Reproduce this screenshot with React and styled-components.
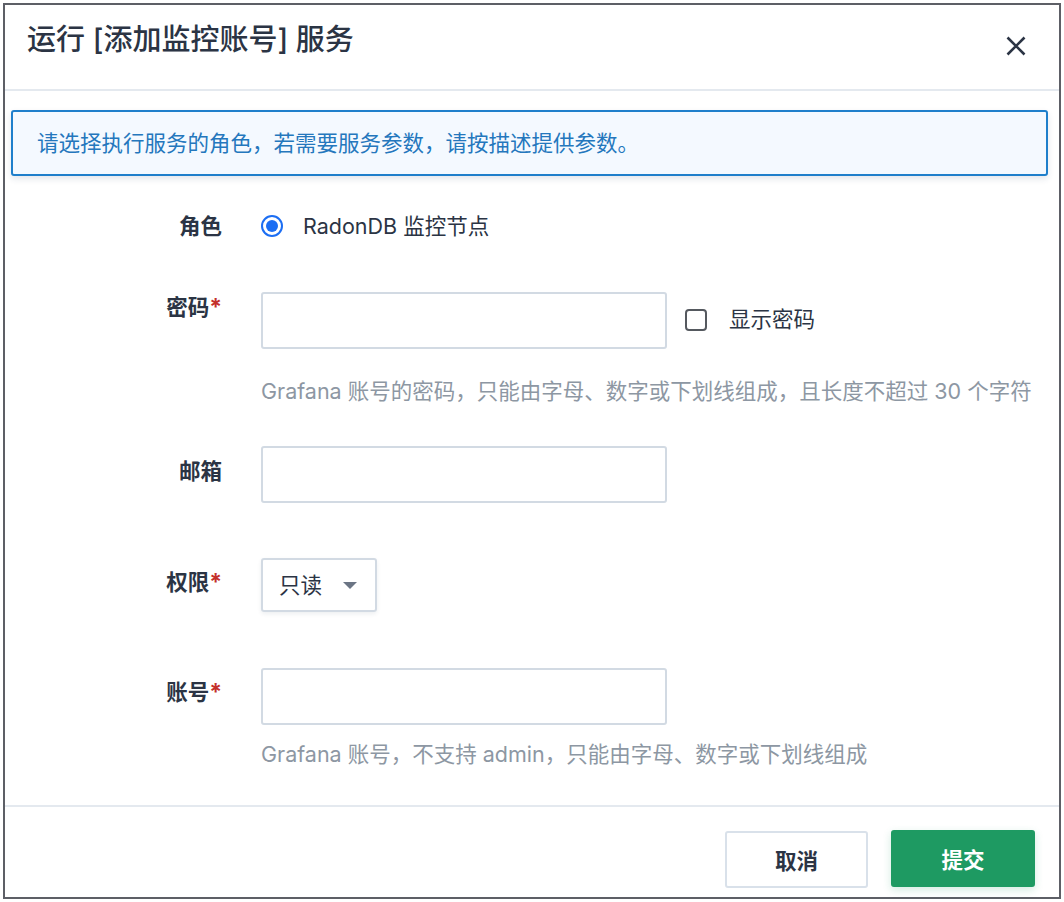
import React from "react";
import styled, { createGlobalStyle } from "styled-components";

const Global = createGlobalStyle`
  html, body { margin: 0; padding: 0; background: #ffffff; }
  body {
    font-family: "Inter", "Noto Sans CJK SC", sans-serif;
    color: #2b3444;
  }
  * { box-sizing: border-box; }
`;

const Frame = styled.div`
  margin: 3px;
  width: 1058px;
  height: 896px;
  border: 2px solid #5d5f66;
  background: #fff;
  display: flex;
  flex-direction: column;
`;

const Header = styled.div`
  height: 86px;
  border-bottom: 2px solid #e4e9ef;
  display: flex;
  align-items: flex-start;
  justify-content: space-between;
  padding: 16px 32px 0 22px;
`;

const Title = styled.h1`
  margin: 0;
  font-size: 29px;
  line-height: 38px;
  font-weight: 500;
  color: #2b3444;
`;

const CloseBtn = styled.button`
  border: 0;
  background: none;
  padding: 0;
  margin-top: 14px;
  width: 22px;
  height: 22px;
  display: flex;
  align-items: center;
  justify-content: center;
  cursor: pointer;
`;

const Alert = styled.div`
  margin: 19px 11px 0 6px;
  height: 66px;
  border: 2px solid #1f7fcb;
  border-radius: 3px;
  background: #f4f9ff;
  box-shadow: 0 3px 6px rgba(30, 60, 100, 0.12);
  display: flex;
  align-items: center;
  padding-left: 24px;
  font-size: 21.5px;
  line-height: 30px;
  color: #2477bd;
`;

const Form = styled.div`
  flex: 1;
  padding-top: 30px;
  display: flex;
  flex-direction: column;
`;

const Field = styled.div`
  display: grid;
  grid-template-columns: 217px 1fr;
  column-gap: 39px;
  align-items: start;
  margin-bottom: ${(p) => p.$gap}px;
`;

const Label = styled.div`
  text-align: right;
  font-size: 21.5px;
  font-weight: 700;
  line-height: 30px;
  padding-top: ${(p) => p.$offset}px;
  color: #2b3444;
  white-space: nowrap;
`;

const Star = styled.span`
  color: #c4302b;
  font-weight: 700;
  font-size: 23px;
`;

const Control = styled.div`
  display: flex;
  flex-direction: column;
`;

const Line = styled.div`
  display: flex;
  align-items: center;
  height: ${(p) => p.$h}px;
`;

const RadioDot = styled.span`
  width: 22px;
  height: 22px;
  border-radius: 50%;
  border: 2px solid #1c6ef3;
  display: inline-flex;
  align-items: center;
  justify-content: center;
  margin-right: 20px;
  &::after {
    content: "";
    width: 12px;
    height: 12px;
    border-radius: 50%;
    background: #1c6ef3;
  }
`;

const Text = styled.span`
  font-size: 21.5px;
  line-height: 30px;
  color: #2b3444;
  margin-top: ${(p) => p.$shift || 0}px;
`;

const Input = styled.div`
  width: 406px;
  height: 57px;
  border: 2px solid #d2dae3;
  border-radius: 3px;
  background: #fff;
`;

const CheckBox = styled.span`
  width: 22px;
  height: 22px;
  border: 2px solid #55595f;
  border-radius: 4px;
  margin-left: 18px;
  margin-right: 22px;
  margin-top: -2px;
`;

const Help = styled.div`
  margin-top: ${(p) => p.$top}px;
  font-size: 21.5px;
  line-height: 30px;
  color: #8d97a3;
  white-space: nowrap;
`;

const Select = styled.div`
  width: 116px;
  height: 54px;
  border: 2px solid #d2dae3;
  border-radius: 3px;
  box-shadow: 0 2px 4px rgba(30, 50, 80, 0.08);
  display: flex;
  align-items: center;
  justify-content: space-between;
  padding: 0 18px 0 16px;
  font-size: 21.5px;
  line-height: 30px;
  color: #2b3444;
`;

const Caret = styled.span`
  width: 0;
  height: 0;
  border-left: 7px solid transparent;
  border-right: 7px solid transparent;
  border-top: 7px solid #6b7584;
`;

const Footer = styled.div`
  border-top: 2px solid #e4e9ef;
  height: 92px;
  display: flex;
  justify-content: flex-end;
  align-items: flex-start;
  gap: 23px;
  padding: 23px 24px 0 0;
`;

const Button = styled.button`
  width: ${(p) => (p.$primary ? 144 : 143)}px;
  height: 57px;
  border-radius: 3px;
  font-family: inherit;
  font-size: 21.5px;
  font-weight: 700;
  cursor: pointer;
  border: 2px solid ${(p) => (p.$primary ? "#1e9a62" : "#d9e1ea")};
  background: ${(p) => (p.$primary ? "#1e9a62" : "#fff")};
  color: ${(p) => (p.$primary ? "#fff" : "#2b3444")};
  box-shadow: ${(p) => (p.$primary ? "0 3px 8px rgba(30,154,98,0.2)" : "none")};
  margin-top: ${(p) => (p.$primary ? 0 : 1)}px;
`;

export default function App() {
  return (
    <>
      <Global />
      <Frame>
        <Header>
          <Title>运行 [添加监控账号] 服务</Title>
          <CloseBtn aria-label="close">
            <svg width="20" height="20" viewBox="0 0 20 20">
              <path d="M1.5 1.5 L18.5 18.5 M18.5 1.5 L1.5 18.5" stroke="#2b3444" strokeWidth="2.6" strokeLinecap="butt" fill="none" />
            </svg>
          </CloseBtn>
        </Header>
        <Alert>请选择执行服务的角色，若需要服务参数，请按描述提供参数。</Alert>
        <Form>
          <Field $gap={46}>
            <Label $offset={5}>角色</Label>
            <Line $h={40}>
              <RadioDot />
              <Text>RadonDB 监控节点</Text>
            </Line>
          </Field>
          <Field $gap={40}>
            <Label $offset={-4}>
              密码<Star>*</Star>
            </Label>
            <Control>
              <Line $h={57}>
                <Input />
                <CheckBox />
                <Text $shift={-4}>显示密码</Text>
              </Line>
              <Help $top={27}>Grafana 账号的密码，只能由字母、数字或下划线组成，且长度不超过 30 个字符</Help>
            </Control>
          </Field>
          <Field $gap={55}>
            <Label $offset={10}>邮箱</Label>
            <Input />
          </Field>
          <Field $gap={56}>
            <Label $offset={9}>
              权限<Star>*</Star>
            </Label>
            <Select>
              <span>只读</span>
              <Caret />
            </Select>
          </Field>
          <Field $gap={0}>
            <Label $offset={9}>
              账号<Star>*</Star>
            </Label>
            <Control>
              <Input />
              <Help $top={14}>Grafana 账号，不支持 admin，只能由字母、数字或下划线组成</Help>
            </Control>
          </Field>
        </Form>
        <Footer>
          <Button>取消</Button>
          <Button $primary>提交</Button>
        </Footer>
      </Frame>
    </>
  );
}
